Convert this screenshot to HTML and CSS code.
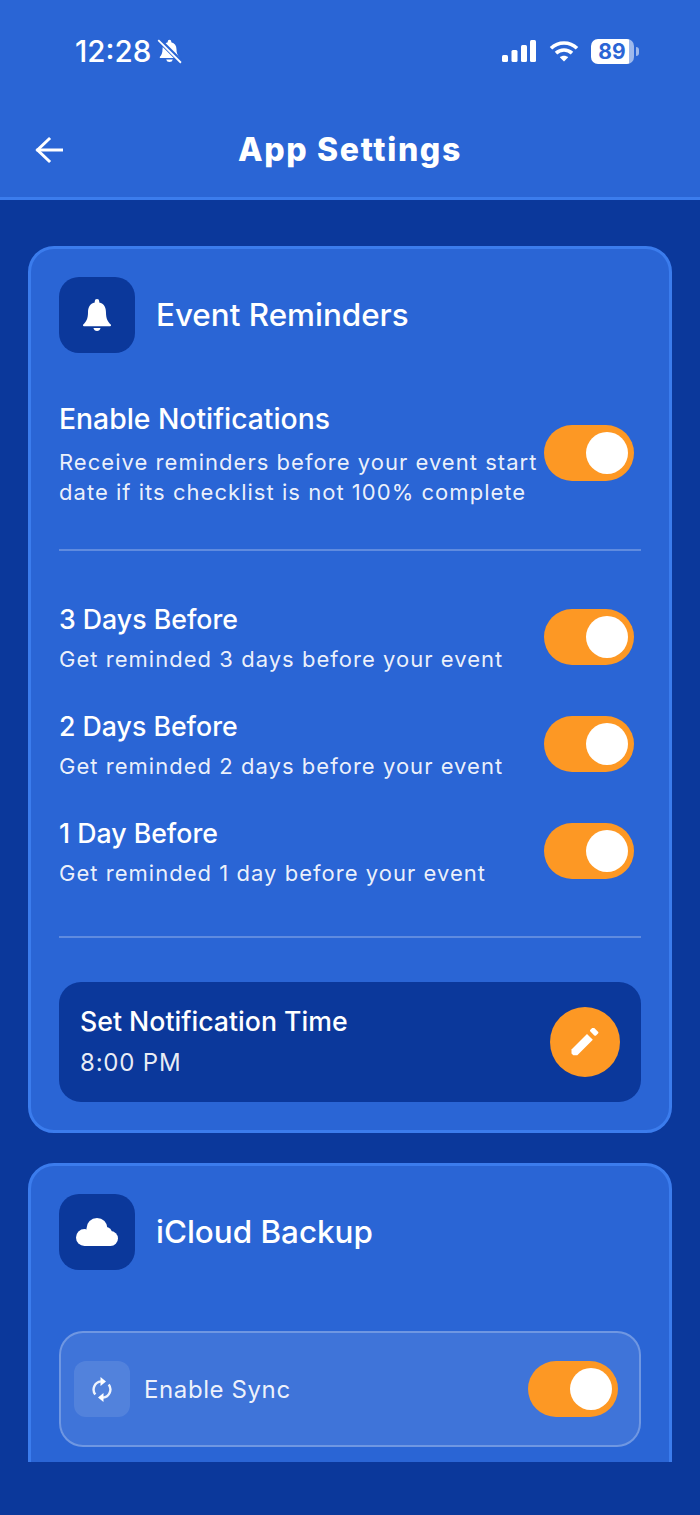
FILE: index.html
```html
<!DOCTYPE html>
<html lang="en">
<head>
  <meta charset="UTF-8">
  <meta name="viewport" content="width=device-width, initial-scale=1.0">
  <title>App Settings</title>
  <link rel="stylesheet" href="styles.css">
</head>
<body>
  <header class="header">
    <div class="status-bar">
      <div class="status-left">
        <span class="clock">12:28</span>
        <svg class="muted-bell" viewBox="0 0 24 24" fill="#fff">
          <path d="M12 .8a1.700 1.700 0 0 0-1.700 1.700v.7C6.900 4.100 5.300 6.800 5.300 9.800c0 3.700-1 5.700-2.500 7.200-.5.500-.1 1.300.6 1.300h17.200c.7 0 1.100-.8.6-1.300-1.500-1.500-2.500-3.500-2.500-7.200 0-3-1.600-5.700-5-6.600v-.7A1.700 1.700 0 0 0 12 .8z"/>
          <path d="M8.800 19.600a3.300 3.300 0 0 0 6.400 0z"/>
          <path d="M1 0 24 23" stroke="#2a65d5" stroke-width="4.600"/>
          <path d="M1.200 1 23 22.800" stroke="#fff" stroke-width="1.700"/>
        </svg>
      </div>
      <div class="status-right">
        <svg class="signal" viewBox="0 0 34 22" fill="#fff">
          <rect x="0" y="15" width="6" height="7" rx="1.500"/>
          <rect x="9.500" y="10" width="6" height="12" rx="1.500"/>
          <rect x="19" y="5" width="6" height="17" rx="1.500"/>
          <rect x="28" y="0" width="6" height="22" rx="1.500"/>
        </svg>
        <svg class="wifi" viewBox="0 0 30 22" fill="none" stroke="#fff" stroke-width="3.600">
          <path d="M2 8.200C9.400 1.200 20.600 1.200 28 8.200"/>
          <path d="M7 13.200c4.600-4.200 11.400-4.200 16 0"/>
          <path d="M15 21.500 10.800 17.300c2.400-2 6-2 8.400 0z" fill="#fff" stroke="none"/>
        </svg>
        <div class="battery"><span class="battery-level">89</span><span class="battery-nub"></span></div>
      </div>
    </div>
    <div class="nav-bar">
      <svg class="back-icon" viewBox="0 0 28 28" fill="none" stroke="#fff" stroke-width="3" stroke-linecap="square">
        <path d="M27 14H3"/>
        <path d="M14 3 2.500 14 14 25"/>
      </svg>
      <h1 class="page-title">App Settings</h1>
    </div>
  </header>

  <main class="content">
    <section class="card">
      <div class="card-header">
        <div class="card-icon">
          <svg class="icon-bell" viewBox="1.400 0 21.200 23.800" preserveAspectRatio="none" fill="#fff">
            <path d="M12 0a1.700 1.700 0 0 0-1.700 1.700v.8C6.600 3.300 5.200 6.200 5.200 9.700c0 4.300-1.300 6.600-3.600 8.700-.5.5-.2 1.200.5 1.200h19.800c.7 0 1-.7.5-1.200-2.300-2.100-3.600-4.400-3.600-8.700 0-3.500-1.400-6.400-5.100-7.200v-.8A1.700 1.700 0 0 0 12 0z"/>
            <path d="M9.300 21a2.800 2.800 0 0 0 5.400 0z"/>
          </svg>
        </div>
        <h2 class="card-title">Event Reminders</h2>
      </div>

      <div class="setting setting-main">
        <div class="setting-text">
          <div class="setting-title">Enable Notifications</div>
          <div class="setting-desc">Receive reminders before your event start<br>date if its checklist is not 100% complete</div>
        </div>
        <div class="toggle"><span class="knob"></span></div>
      </div>

      <div class="divider divider-top"></div>

      <div class="setting">
        <div class="setting-text">
          <div class="setting-title">3 Days Before</div>
          <div class="setting-desc">Get reminded 3 days before your event</div>
        </div>
        <div class="toggle"><span class="knob"></span></div>
      </div>
      <div class="setting">
        <div class="setting-text">
          <div class="setting-title">2 Days Before</div>
          <div class="setting-desc">Get reminded 2 days before your event</div>
        </div>
        <div class="toggle"><span class="knob"></span></div>
      </div>
      <div class="setting">
        <div class="setting-text">
          <div class="setting-title">1 Day Before</div>
          <div class="setting-desc">Get reminded 1 day before your event</div>
        </div>
        <div class="toggle"><span class="knob"></span></div>
      </div>

      <div class="divider divider-bottom"></div>

      <div class="time-box">
        <div class="time-text">
          <div class="setting-title">Set Notification Time</div>
          <div class="time-value">8:00 PM</div>
        </div>
        <div class="edit-btn">
          <svg class="icon-pencil" viewBox="0 0 28 28" fill="#fff">
            <path d="M0.500 21.500 16 6l5.800 5.800L6.300 27.300H2.300L0.500 25.500z"/>
            <rect x="19.200" y="1" width="8" height="5.200" rx="1.200" transform="rotate(45 23.200 3.600)"/>
          </svg>
        </div>
      </div>
    </section>

    <section class="card card-backup">
      <div class="card-header">
        <div class="card-icon">
          <svg class="icon-cloud" viewBox="0 0 42 28" fill="#fff">
            <circle cx="21" cy="10.500" r="10.500"/>
            <circle cx="8.500" cy="19.500" r="8.500"/>
            <circle cx="34.500" cy="20.500" r="7.500"/>
            <circle cx="30" cy="15" r="6"/>
            <rect x="8.500" y="14" width="26" height="14"/>
          </svg>
        </div>
        <h2 class="card-title">iCloud Backup</h2>
      </div>

      <div class="sync-box">
        <div class="sync-left">
          <div class="sync-icon">
            <svg class="icon-sync" viewBox="0 0 20 25" fill="none" stroke="#fff" stroke-width="2.400" stroke-opacity="0.9">
              <path d="M3.300 17.500A8.200 8.200 0 0 1 9 4.400"/>
              <path d="M16.700 7.500A8.200 8.200 0 0 1 11 20.600"/>
              <path d="M8.500 0 14 4.500 8.500 9z" fill="#fff" stroke="none"/>
              <path d="M11.500 16 6 20.500 11.500 25z" fill="#fff" stroke="none"/>
            </svg>
          </div>
          <span class="sync-label">Enable Sync</span>
        </div>
        <div class="toggle"><span class="knob"></span></div>
      </div>
    </section>
  </main>
</body>
</html>
```

FILE: styles.css
```css
* {
  box-sizing: border-box;
}

body {
  margin: 0;
  height: 1515px;
  overflow: hidden;
  font-family: Inter, "Noto Sans", sans-serif;
  color: #fff;
  background-color: #0b389b;
}

.header {
  height: 200px;
  background-color: #2a65d5;
  border-bottom: 3px solid #3b7ced;
}

.status-bar {
  height: 100px;
  padding: 2px 66px 0 75px;
  display: flex;
  justify-content: space-between;
  align-items: center;
}

.status-left,
.status-right {
  display: flex;
  align-items: center;
}

.clock {
  font-size: 29.6px;
  font-weight: 500;
  line-height: 36px;
}

.muted-bell {
  width: 25px;
  height: 25px;
  margin-left: 6px;
}

.signal {
  width: 34px;
  height: 22px;
}

.wifi {
  width: 30px;
  height: 22px;
  margin-left: 13px;
}

.battery {
  position: relative;
  width: 43px;
  height: 25px;
  margin-left: 12px;
  border-radius: 7px;
  background: linear-gradient(90deg, #fff 89%, rgba(255, 255, 255, 0.55) 89%);
  color: #2a65d5;
  font-size: 21px;
  font-weight: 700;
  line-height: 25px;
  text-align: center;
}

.battery-level {
  display: block;
  padding-right: 1px;
}

.battery-nub {
  position: absolute;
  top: 8px;
  right: -5px;
  width: 3px;
  height: 9px;
  border-radius: 0 3px 3px 0;
  background-color: rgba(255, 255, 255, 0.55);
}

.nav-bar {
  height: 97px;
  padding: 2px 36px 0;
  display: flex;
  align-items: center;
}

.back-icon {
  width: 28px;
  height: 28px;
  margin-left: -1px;
}

.page-title {
  flex: 1;
  margin: 0 27px 0 0;
  font-size: 32px;
  font-weight: 800;
  letter-spacing: 1.65px;
  text-align: center;
}

.content {
  height: 1262px;
  overflow: hidden;
  padding: 46px 28px 0;
}

.card {
  margin-bottom: 30px;
  padding: 28px;
  background-color: #2a65d5;
  border: 3px solid #3b7ced;
  border-radius: 26px;
}

.card-backup {
  padding-bottom: 70px;
}

.card-header {
  display: flex;
  align-items: center;
  gap: 21px;
}

.card-icon {
  width: 76px;
  height: 76px;
  border-radius: 20px;
  background-color: #0b389b;
  display: flex;
  justify-content: center;
  align-items: center;
}

.icon-bell {
  width: 28px;
  height: 33px;
}

.icon-cloud {
  width: 42px;
  height: 28px;
}

.card-title {
  margin: 0;
  font-size: 31.4px;
  font-weight: 500;
  line-height: 40px;
}

.setting {
  height: 107px;
  display: flex;
  justify-content: space-between;
  align-items: center;
  padding-right: 7px;
}

.setting-text {
  padding-top: 2px;
}

.setting-main {
  height: 132px;
  margin-top: 34px;
}

.setting-main .setting-text {
  padding-top: 1px;
}

.setting-main .setting-title {
  font-size: 28.3px;
}

.setting-main .setting-desc {
  margin-top: 10px;
}

.setting-title {
  font-size: 26.7px;
  font-weight: 500;
  line-height: 36px;
}

.setting-desc {
  margin-top: 7px;
  font-size: 22px;
  letter-spacing: 1.03px;
  line-height: 30px;
  color: rgba(255, 255, 255, 0.92);
}

.toggle {
  flex-shrink: 0;
  width: 90px;
  height: 56px;
  padding: 7px 6px;
  border-radius: 28px;
  background-color: #fd9824;
  display: flex;
  justify-content: flex-end;
}

.knob {
  width: 42px;
  height: 42px;
  border-radius: 50%;
  background-color: #fff;
}

.divider {
  height: 2px;
  background-color: rgba(255, 255, 255, 0.25);
}

.divider-top {
  margin: 30px 0 32px;
}

.divider-bottom {
  margin-top: 32px;
}

.time-box {
  height: 120px;
  margin-top: 44px;
  padding: 0 21px;
  border-radius: 22px;
  background-color: #0b389b;
  display: flex;
  justify-content: space-between;
  align-items: center;
}

.time-text {
  padding-bottom: 1px;
}

.time-value {
  margin-top: 6px;
  font-size: 24px;
  letter-spacing: 0.8px;
  line-height: 36px;
  color: rgba(255, 255, 255, 0.92);
}

.edit-btn {
  width: 70px;
  height: 70px;
  border-radius: 50%;
  background-color: #fd9824;
  display: flex;
  justify-content: center;
  align-items: center;
}

.icon-pencil {
  width: 28px;
  height: 28px;
}

.sync-box {
  height: 116px;
  margin-top: 61px;
  padding: 0 21px 0 13px;
  border: 2px solid rgba(255, 255, 255, 0.25);
  border-radius: 24px;
  background-color: rgba(255, 255, 255, 0.1);
  display: flex;
  justify-content: space-between;
  align-items: center;
}

.sync-left {
  display: flex;
  align-items: center;
  gap: 14px;
}

.sync-icon {
  width: 56px;
  height: 56px;
  border-radius: 12px;
  background-color: rgba(255, 255, 255, 0.1);
  display: flex;
  justify-content: center;
  align-items: center;
}

.icon-sync {
  width: 20px;
  height: 25px;
}

.sync-label {
  font-size: 24px;
  letter-spacing: 0.6px;
  color: rgba(255, 255, 255, 0.92);
}
```
